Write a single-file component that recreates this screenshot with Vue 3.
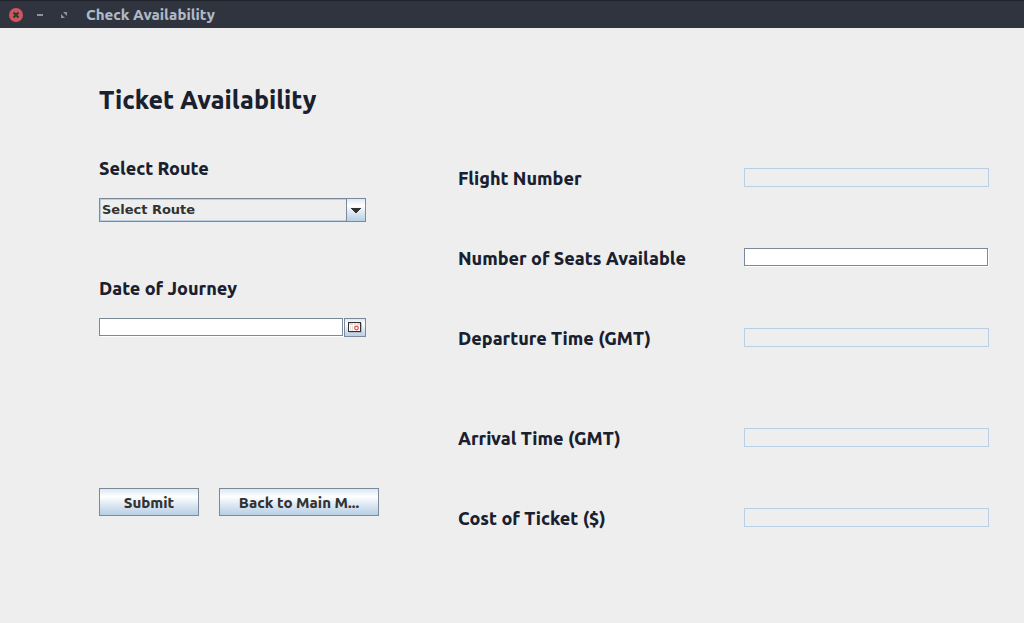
<script setup>
import { ref } from 'vue'

const route = ref('Select Route')
const journeyDate = ref('')
const results = ref([
  { id: 'flight', label: 'Flight Number', value: '', editable: false },
  { id: 'seats', label: 'Number of Seats Available', value: '', editable: true },
  { id: 'departure', label: 'Departure Time (GMT)', value: '', editable: false },
  { id: 'arrival', label: 'Arrival Time (GMT)', value: '', editable: false, spaced: true },
  { id: 'cost', label: 'Cost of Ticket ($)', value: '', editable: false },
])
</script>

<template>
  <div class="window">
    <header class="titlebar">
      <button class="win-btn" type="button" aria-label="Close">
        <svg width="16" height="16" viewBox="0 0 16 16">
          <circle cx="8" cy="8" r="7" fill="#cc575d" />
          <path d="M5.5 5.5l5 5M10.5 5.5l-5 5" stroke="#2f343f" stroke-width="2" />
        </svg>
      </button>
      <button class="win-btn" type="button" aria-label="Minimize">
        <svg width="16" height="16" viewBox="0 0 16 16">
          <rect x="5" y="7" width="6" height="2" fill="#90939b" />
        </svg>
      </button>
      <button class="win-btn" type="button" aria-label="Maximize">
        <svg width="16" height="16" viewBox="0 0 16 16" fill="#90939b">
          <path d="M7 5h4v4zM5 7v4h4z" />
        </svg>
      </button>
      <span class="title">Check Availability</span>
    </header>

    <main class="content">
      <form class="search" @submit.prevent>
        <h1>Ticket Availability</h1>
        <label for="route">Select Route</label>
        <div class="combo">
          <select id="route" v-model="route">
            <option>Select Route</option>
          </select>
          <span class="combo-arrow" aria-hidden="true">
            <svg width="10" height="5" viewBox="0 0 10 5" shape-rendering="crispEdges">
              <path d="M0 0h10v1H0zM1 1h8v1H1zM2 2h6v1H2zM3 3h4v1H3zM4 4h2v1H4z" fill="#333" />
            </svg>
          </span>
        </div>
        <label class="date-label" for="date">Date of Journey</label>
        <div class="date-row">
          <input id="date" v-model="journeyDate" class="field editable" type="text" />
          <button class="date-btn" type="button" aria-label="Choose date">
            <svg width="14" height="11" viewBox="0 0 14 11">
              <rect x="1" y="1" width="13" height="10" fill="#b4bcc5" />
              <rect x="0" y="0" width="13" height="10" fill="#333" />
              <rect x="1" y="1" width="11" height="2" fill="#e2dac6" />
              <rect x="1" y="3" width="11" height="6" fill="#fff" />
              <path d="M2.5 4v5M4.5 4v5" stroke="#e2e2e2" />
              <path d="M5.500 1v2M8.500 1v2" stroke="#fff" />
              <circle cx="8.5" cy="6" r="1.8" fill="#fff" stroke="#e04848" stroke-width="1.2" />
            </svg>
          </button>
        </div>
        <div class="actions">
          <button class="action submit" type="submit">Submit</button>
          <button class="action back" type="button" title="Back to Main Menu">Back to Main M...</button>
        </div>
      </form>

      <section class="results">
        <div v-for="item in results" :key="item.id" class="row" :class="{ spaced: item.spaced }">
          <label :for="item.id">{{ item.label }}</label>
          <input
            :id="item.id"
            v-model="item.value"
            class="field"
            :class="item.editable ? 'editable' : 'locked'"
            type="text"
            :readonly="!item.editable"
          />
        </div>
      </section>
    </main>
  </div>
</template>

<style>
body {
  background: #eee;
}
</style>

<style scoped>
.window {
  min-height: 100vh;
  background: #eee;
  color: #1a202e;
  font-family: Ubuntu, "Noto Sans", sans-serif;
  font-weight: 800;
}
.window * {
  box-sizing: border-box;
}
.titlebar {
  display: flex;
  align-items: center;
  gap: 8px;
  height: 28px;
  padding: 0 8px;
  background: #2f343f;
  border-top: 1px solid #20232b;
}
.win-btn {
  display: flex;
  width: 16px;
  height: 16px;
  padding: 0;
  border: 0;
  background: none;
}
.title {
  margin-left: 6px;
  color: #afb8c5;
  font-size: 15px;
  line-height: 20px;
}
.content {
  display: grid;
  grid-template-columns: 359fr 531fr;
  padding: 56px 35px 56px 99px;
}
.search {
  display: flex;
  flex-direction: column;
  align-items: flex-start;
}
h1 {
  margin: 0 0 42px;
  font-size: 25px;
  font-weight: inherit;
  line-height: 32px;
}
label {
  font-size: 18px;
  line-height: 20px;
  white-space: nowrap;
}
.combo {
  position: relative;
  width: 267px;
  height: 24px;
  margin-top: 20px;
}
select {
  appearance: none;
  display: block;
  width: 100%;
  height: 100%;
  padding: 0 22px 1px 2px;
  border: 1px solid #7a8a99;
  border-radius: 0;
  background: #eee;
  box-shadow: inset 0 0 0 1px #b8cfe5;
  color: #333;
  font: 700 13px "DejaVu Sans", sans-serif;
}
.combo-arrow {
  position: absolute;
  top: 0;
  right: 0;
  display: flex;
  align-items: center;
  justify-content: center;
  width: 20px;
  height: 100%;
  border: 1px solid #7a8a99;
  background: linear-gradient(#dde8f3, #fff 30%, #dde8f3 60%, #b8cfe5);
  pointer-events: none;
}
.date-label {
  margin-top: 56px;
}
.date-row {
  display: flex;
  width: 267px;
  margin-top: 20px;
}
.field {
  flex: 1;
  min-width: 0;
  height: 19px;
  padding: 0 2px;
  border-radius: 0;
  color: #333;
  font: 12px "DejaVu Sans", sans-serif;
}
.editable {
  height: 18px;
  margin: 0 1px 1px 0;
  border: 1px solid #7a8a99;
  background: #fff;
  box-shadow: 1px 1px 0 #fff;
}
.locked {
  border: 1px solid #b8cfe5;
  background: #eee;
}
.date-btn {
  display: flex;
  align-items: center;
  justify-content: center;
  width: 22px;
  height: 19px;
  padding: 0;
  border: 1px solid #7a8a99;
  background: linear-gradient(#dde8f3, #fff 30%, #dde8f3 60%, #b8cfe5);
}
.actions {
  display: flex;
  gap: 20px;
  margin-top: 151px;
}
.action {
  height: 28px;
  padding: 0;
  border: 1px solid #7a8a99;
  background: linear-gradient(#dde8f3, #fff 30%, #dde8f3 60%, #b8cfe5);
  color: #333;
  font: inherit;
  font-size: 15px;
}
.submit {
  width: 100px;
}
.back {
  width: 160px;
}
.results {
  display: flex;
  flex-direction: column;
  gap: 60px;
  padding-top: 84px;
}
.row {
  display: grid;
  grid-template-columns: 286fr 245fr;
  height: 20px;
}
.row.spaced {
  margin-top: 20px;
}
</style>
